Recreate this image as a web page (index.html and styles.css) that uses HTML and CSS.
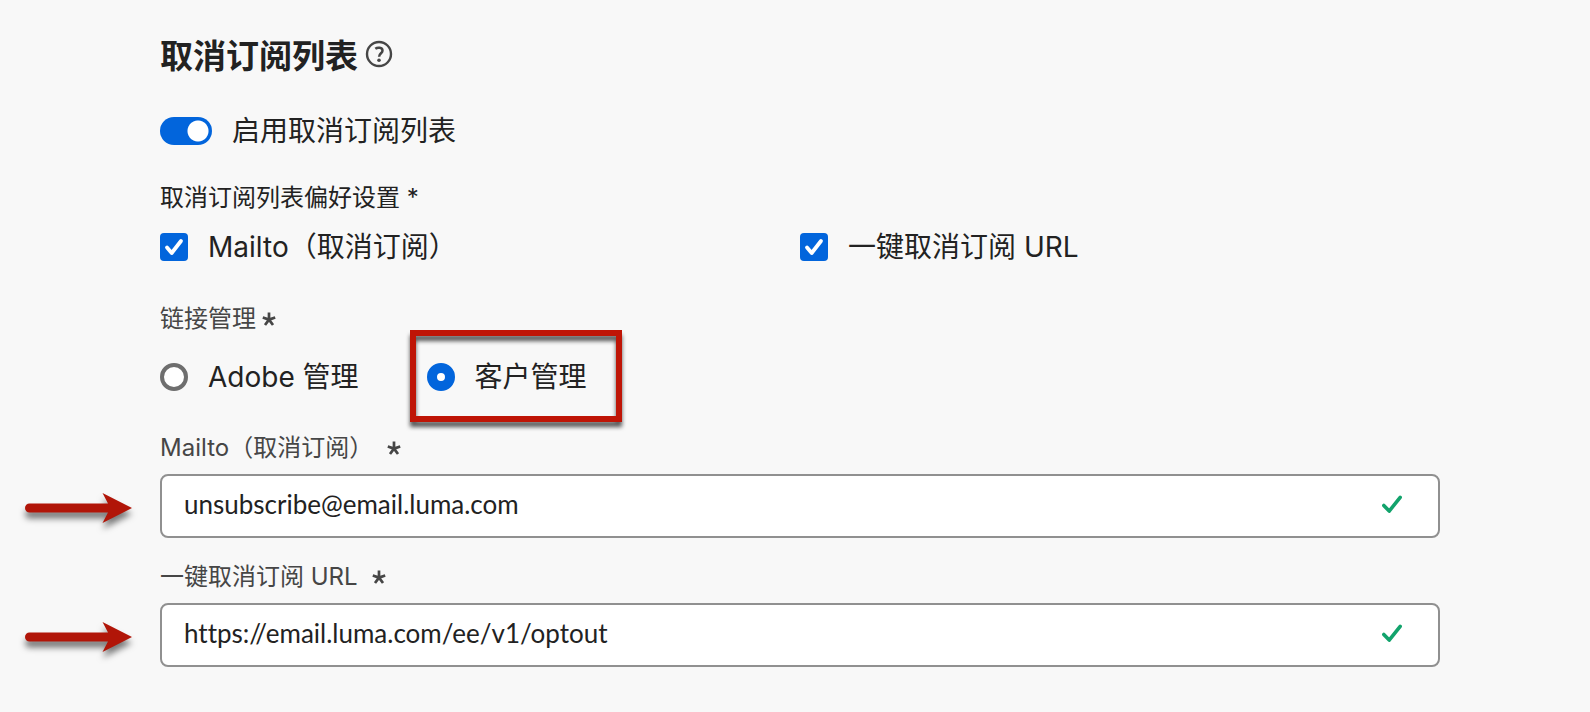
FILE: index.html
```html
<!DOCTYPE html>
<html lang="zh-CN">
<head>
<meta charset="utf-8">
<title>取消订阅列表</title>
<link rel="stylesheet" href="styles.css">
</head>
<body>
<svg class="defs" aria-hidden="true">
  <symbol id="asterisk" viewBox="0 0 14 14">
    <path d="M7 7.6V0.600M7 7.6L0.800 5.500M7 7.6L13.200 5.500M7 7.6L3 13M7 7.6L11 13" fill="none" stroke="currentColor" stroke-width="2.7"/>
  </symbol>
  <symbol id="valid" viewBox="0 0 20 18">
    <path d="M1.8 10L7.2 15.6L18.2 1.8" fill="none" stroke="currentColor" stroke-width="3.6" stroke-linecap="round" stroke-linejoin="round"/>
  </symbol>
  <symbol id="arrow" viewBox="0 0 107 30">
    <path d="M4.5 10.5H83L77.500 0L107 15L77.500 30L83 19.500H4.500A4.500 4.500 0 0 1 4.500 10.500Z" fill="currentColor"/>
  </symbol>
</svg>
<main class="panel">
  <header class="heading">
    <h1 class="title">取消订阅列表</h1>
    <button class="help" type="button" aria-label="帮助">
      <svg viewBox="0 0 28 28" width="28" height="28" fill="none" stroke="currentColor" aria-hidden="true">
        <circle cx="14" cy="14" r="12" stroke-width="2.4"/>
        <path d="M10.300 8.800C12.500 7.200 17.500 7.200 17.500 10.700C17.500 13.200 14.100 13.500 14.100 16.800" stroke-width="2.500"/>
        <circle cx="14" cy="20.300" r="1.800" fill="currentColor" stroke="none"/>
      </svg>
    </button>
  </header>

  <label class="choice enable">
    <input class="switch" type="checkbox" role="switch" checked>
    <span>启用取消订阅列表</span>
  </label>

  <fieldset class="group">
    <legend class="caption strong">取消订阅列表偏好设置 *</legend>
    <div class="columns">
      <label class="choice"><input class="check" type="checkbox" checked><span>Mailto（取消订阅）</span></label>
      <label class="choice"><input class="check" type="checkbox" checked><span>一键取消订阅 URL</span></label>
    </div>
  </fieldset>

  <fieldset class="group links">
    <legend class="caption">链接管理<svg class="required tight" aria-hidden="true"><use href="#asterisk"/></svg></legend>
    <div class="radios">
      <label class="choice"><input class="radio" type="radio" name="link"><span>Adobe 管理</span></label>
      <label class="choice marked"><input class="radio" type="radio" name="link" checked><span>客户管理</span></label>
    </div>
  </fieldset>

  <div class="field first">
    <label class="caption" for="mailto">Mailto（取消订阅）<svg class="required" aria-hidden="true"><use href="#asterisk"/></svg></label>
    <div class="control">
      <input class="text" id="mailto" type="text" value="unsubscribe@email.luma.com" required>
      <svg class="valid" aria-hidden="true"><use href="#valid"/></svg>
      <svg class="arrow" aria-hidden="true"><use href="#arrow"/></svg>
    </div>
  </div>

  <div class="field">
    <label class="caption" for="url">一键取消订阅 URL<svg class="required" aria-hidden="true"><use href="#asterisk"/></svg></label>
    <div class="control">
      <input class="text" id="url" type="text" value="https://email.luma.com/ee/v1/optout" required>
      <svg class="valid" aria-hidden="true"><use href="#valid"/></svg>
      <svg class="arrow" aria-hidden="true"><use href="#arrow"/></svg>
    </div>
  </div>
</main>
</body>
</html>
```
FILE: styles.css
```css
* { box-sizing: border-box; }

body {
  margin: 0;
  background: #f8f8f8;
  color: #222;
  font-family: Inter, "Noto Sans CJK SC", sans-serif;
  font-size: 28px;
  line-height: 36px;
}

.defs { position: absolute; width: 0; height: 0; }

.panel { padding: 34px 150px 44px 160px; }

.heading { display: flex; align-items: center; gap: 7px; }
.title { margin: 0; font-size: 33px; line-height: 44px; font-weight: 700; }
.help {
  display: flex;
  margin: 0 0 4px;
  padding: 0;
  border: 0;
  background: none;
  color: #464646;
}

.choice { position: relative; display: flex; align-items: center; gap: 20px; }
.enable { margin-top: 35px; }
.choice input { appearance: none; flex: none; margin: 0; width: 28px; height: 28px; }

.choice .switch {
  width: 52px;
  border-radius: 14px;
  background: radial-gradient(circle at 38px 14px, #fff 10px, #0265dc 11px);
}

.choice .check {
  border-radius: 4px;
  background: #0265dc url("data:image/svg+xml,%3Csvg xmlns='http://www.w3.org/2000/svg' viewBox='0 0 28 28'%3E%3Cpath d='M7 14.5L11.7 20L21 8' fill='none' stroke='white' stroke-width='3.8' stroke-linecap='round' stroke-linejoin='round'/%3E%3C/svg%3E");
}

.choice .radio { border: 4px solid #6e6e6e; border-radius: 50%; background: #fff; }
.choice .radio:checked { border: 10px solid #0265dc; }

.group { margin: 32px 0 0; padding: 0; border: 0; min-width: 0; }
.caption {
  display: flex;
  align-items: center;
  padding: 0;
  color: #464646;
  font-size: 24px;
  line-height: 34px;
}
.strong { color: #222; }
.columns { display: grid; grid-template-columns: 1fr 1fr; padding-top: 14px; }

.links { margin-top: 37px; }
.radios { display: flex; gap: 68px; padding-top: 23px; }
.marked::after {
  content: "";
  position: absolute;
  inset: -29px -35px -27px -17px;
  border: 6px solid #bf1506;
  filter: drop-shadow(0 5px 2px #555);
  pointer-events: none;
}

.required { width: 14px; height: 14px; margin-left: 14px; }
.tight { margin-left: 6px; }

.field { margin-top: 22px; }
.first { margin-top: 36px; }
.field .caption { padding-bottom: 9px; }
.control { position: relative; }
.text {
  display: block;
  width: 100%;
  height: 64px;
  padding: 0 80px 4px 22px;
  border: 2px solid #909090;
  border-radius: 8px;
  background: #fff;
  color: #222;
  font-family: Lato, sans-serif;
  font-size: 26px;
  font-variant-ligatures: none;
}
.valid { position: absolute; right: 38px; top: 21px; width: 20px; height: 19px; color: #12a36c; }
.arrow {
  position: absolute;
  left: -135px;
  top: 19px;
  width: 107px;
  height: 30px;
  overflow: visible;
  color: #b11508;
  filter: drop-shadow(0 6px 3px #777);
}
```
